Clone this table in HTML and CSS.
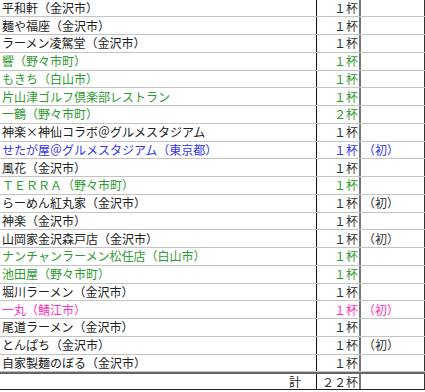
FILE: index.html
```html
<!DOCTYPE html>
<html lang="ja">
<head>
<meta charset="utf-8">
<link rel="stylesheet" href="styles.css">
</head>
<body>
<div class="sheet">
  <div class="row"><div class="name">平和軒（金沢市）</div><div class="num">１杯</div><div class="note"></div></div>
  <div class="row"><div class="name">麺や福座（金沢市）</div><div class="num">１杯</div><div class="note"></div></div>
  <div class="row"><div class="name">ラーメン凌駕堂（金沢市）</div><div class="num">１杯</div><div class="note"></div></div>
  <div class="row green"><div class="name">響（野々市町）</div><div class="num">１杯</div><div class="note"></div></div>
  <div class="row green"><div class="name">もきち（白山市）</div><div class="num">１杯</div><div class="note"></div></div>
  <div class="row green"><div class="name">片山津ゴルフ倶楽部レストラン</div><div class="num">１杯</div><div class="note"></div></div>
  <div class="row green"><div class="name">一鶴（野々市町）</div><div class="num">２杯</div><div class="note"></div></div>
  <div class="row"><div class="name">神楽×神仙コラボ＠グルメスタジアム</div><div class="num">１杯</div><div class="note"></div></div>
  <div class="row blue"><div class="name">せたが屋＠グルメスタジアム（東京都）</div><div class="num">１杯</div><div class="note">（初）</div></div>
  <div class="row"><div class="name">風花（金沢市）</div><div class="num">１杯</div><div class="note"></div></div>
  <div class="row green"><div class="name">ＴＥＲＲＡ（野々市町）</div><div class="num">１杯</div><div class="note"></div></div>
  <div class="row"><div class="name">らーめん紅丸家（金沢市）</div><div class="num">１杯</div><div class="note">（初）</div></div>
  <div class="row"><div class="name">神楽（金沢市）</div><div class="num">１杯</div><div class="note"></div></div>
  <div class="row"><div class="name">山岡家金沢森戸店（金沢市）</div><div class="num">１杯</div><div class="note">（初）</div></div>
  <div class="row green"><div class="name">ナンチャンラーメン松任店（白山市）</div><div class="num">１杯</div><div class="note"></div></div>
  <div class="row green"><div class="name">池田屋（野々市町）</div><div class="num">１杯</div><div class="note"></div></div>
  <div class="row"><div class="name">堀川ラーメン（金沢市）</div><div class="num">１杯</div><div class="note"></div></div>
  <div class="row pink"><div class="name">一丸（鯖江市）</div><div class="num">１杯</div><div class="note">（初）</div></div>
  <div class="row"><div class="name">尾道ラーメン（金沢市）</div><div class="num">１杯</div><div class="note"></div></div>
  <div class="row"><div class="name">とんぱち（金沢市）</div><div class="num">１杯</div><div class="note">（初）</div></div>
  <div class="row"><div class="name">自家製麺のぼる（金沢市）</div><div class="num">１杯</div><div class="note"></div></div>
  <div class="row total"><div class="name">計</div><div class="num">２２杯</div><div class="note"></div></div>
</div>
</body>
</html>
```

FILE: styles.css
```css
html, body {
  margin: 0;
  padding: 0;
  background: #fff;
}

.sheet {
  width: 425px;
  font-family: "Noto Sans CJK JP", "Noto Sans", sans-serif;
  font-size: 12px;
  color: #222;
}

.row {
  display: grid;
  grid-template-columns: 317px 44px 64px;
  height: 17.75px;
  box-sizing: border-box;
  border-bottom: 1px solid #c4c4c4;
  line-height: 16px;
}

.row:first-child {
  height: 17.25px;
}

.row > div {
  display: flex;
  align-items: center;
  box-sizing: border-box;
  white-space: nowrap;
  overflow: hidden;
}

.name {
  padding-left: 2px;
  border-right: 1px solid #111;
}

.num {
  justify-content: flex-end;
  padding-right: 1px;
  border-right: 2px solid #777;
  color: #333;
}

.note {
  padding-left: 2px;
  border-right: 1px solid #333;
  color: #333;
}

.green .name, .green .num, .green .note { color: #2f9a2f; }
.blue .name, .blue .num, .blue .note { color: #3535ee; }
.pink .name, .pink .num, .pink .note { color: #ff33bb; }

.total {
  height: 18px;
  border-top: 2px solid #666;
  border-bottom: 1px solid #222;
}

.total .name {
  justify-content: flex-end;
  padding-right: 15px;
}
```
